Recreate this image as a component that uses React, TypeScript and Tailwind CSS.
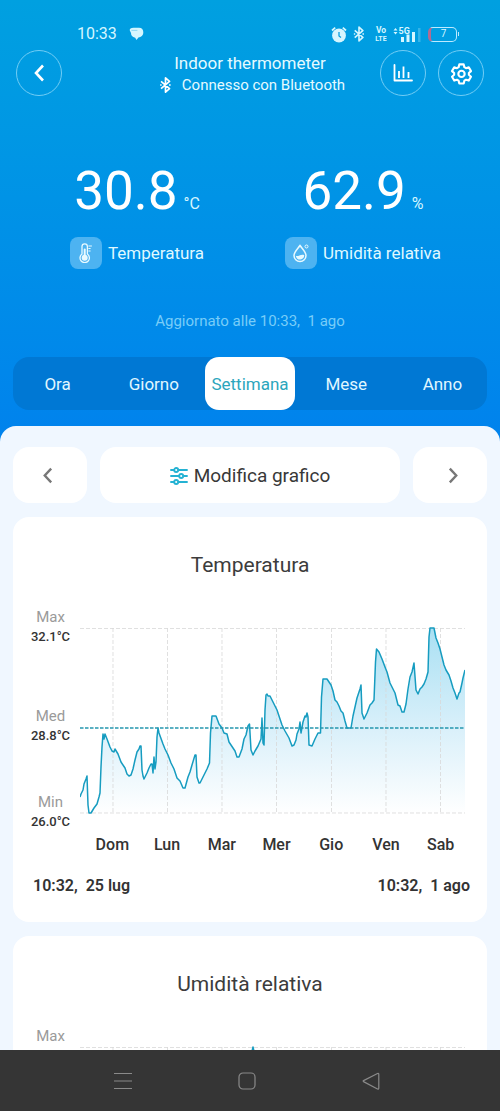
import React, { useState } from 'react';

const PERIODS = ['Ora', 'Giorno', 'Settimana', 'Mese', 'Anno'];
const DAYS = ['Dom', 'Lun', 'Mar', 'Mer', 'Gio', 'Ven', 'Sab'];
const DAY_LINES = [33, 87.5, 142, 196.5, 251.5, 306, 360.5];

const TEMPERATURE =
  '0,170 1,167 3,163 4,157 6,152 7,149 8,178 9,186 11,186 14,181 17,177 19,170 20,166 21,140 22,120 23,107 24,112 25,107 27,112 30,120 32,124 34,125 35,122 38,127 41,135 45,141 47,147 49,149 51,148 53,142 55,133 57,125 59,122 60,119 61,119 62,143 63,149 64,152 65,150 67,146 69,141 71,137 72,137 73,146 74,130 75,142 76,135 77,110 78,101 79,106 83,117 85,122 88,128 91,136 94,142 97,151 100,154 103,161 105,161 108,150 110,145 112,138 115,128 116,128 117,150 119,156 120,156 123,150 127,142 129.5,136 130.5,106 132,89 136,89 139,97 142,101 144,106 147,107 149,115 153,121 155,124 157,130 159,130 162,122 164,112 166,108 168,99 169.5,97 171,123 173,128 175,124 178,119 181,112 182,91 183,116 184,118 185,83 186,68 187,67 188,69 190,69 193,75 195,79 197,83 200,92 202,98 205,104 209,111 212,119 214,118 216,113 217,107 219,102 220,95 221,106 223,95 225,89 226,90 227,86 228,90 229,118 232,119 235,112 238,106 240.5,106 241.5,70 243,52 247,52 249,55 251,58 253,64 255,73 257,75 259,79 261,84 263,86 265,94 267,101 271,101 273,89 275,80 277,71 280,62 281,58 282,86 284,92 287,86 290,78 292,76 294,73 295.5,35 296.5,22 299,25 302,32 305,40 307,45 310,56 312,60 315,66 318,78 320,79 322,85 324,85 326,77 328,62 330,50 332,45 334,36 336,63 338,67 340,62 342,60 344,57 346,52 348,45 349,10 350,1 354,1 356,11 358,16 360,22 361,26 364,38 366,43 369,48 371,54 373,61 375,66 377,72 379,66 380,65 382,56 383,51 385,43';

const HUMIDITY =
  '0,120 20,90 30,60 50,110 75,50 90,95 110,40 130,80 150,30 165,35 173,1 181,35 200,80 230,60 250,110 280,70 310,130 340,90 385,120';

function Bluetooth({ className }: { className: string }) {
  return (
    <svg viewBox="0 0 14 18" className={className} fill="none" stroke="currentColor" strokeWidth="1.9" aria-hidden="true">
      <path d="M2 4.8 11.5 13 7 17V1l4.5 4L2 13.2" strokeLinejoin="round" />
      <path d="M1 9h1.6M11 9h1.8" strokeWidth="1.8" />
    </svg>
  );
}

function Chevron({ flip = false, className }: { flip?: boolean; className: string }) {
  return (
    <svg viewBox="0 0 12 18" className={className} fill="none" stroke="currentColor" strokeWidth="2.6" aria-hidden="true">
      <path d={flip ? 'M2 1.5 9 9l-7 7.5' : 'M10 1.5 3 9l7 7.5'} />
    </svg>
  );
}

function StatusBar() {
  return (
    <div className="flex h-5 items-center justify-between pl-[77px] pr-[41px] text-[#d5f6ff]">
      <div className="flex items-center gap-3">
        <span className="text-base leading-5">10:33</span>
        <svg viewBox="0 0 15 14" className="h-[14px] w-[15px]" fill="currentColor" aria-hidden="true">
          <path d="M4.500 .8h5.500C13 .8 14.300 2.700 14.300 5.200c0 3.200-2.200 5-4.900 5.200L7.500 13 6.200 10.700C3.300 10.200 2 8.400 2 6L.8 3.400C.4 1.700 2 .8 4.500 .8Z" />
          <path d="M2.400 3.400h6" stroke="#60c4ec" strokeWidth=".6" />
        </svg>
      </div>
      <div className="flex items-center">
        <svg viewBox="0 0 16 17" className="h-[17px] w-4" fill="none" stroke="currentColor" aria-hidden="true">
          <circle cx="8" cy="9.500" r="6.900" fill="currentColor" stroke="none" />
          <path d="M1 4.500 4.200 1.600M15 4.500l-3.200-2.900" strokeWidth="1.700" />
          <path d="M8 6v4l2 1.500" stroke="#079ee0" strokeWidth="1.300" />
        </svg>
        <Bluetooth className="ml-1.5 h-4 w-3" />
        <svg viewBox="0 0 12 16" className="ml-2.5 h-4 w-3" fill="currentColor" aria-hidden="true">
          <text x="6" y="7" textAnchor="middle" fontSize="8.500" fontWeight="700">Vo</text>
          <text x="6" y="15" textAnchor="middle" fontSize="7" fontWeight="700">LTE</text>
        </svg>
        <svg viewBox="0 0 29 16" className="ml-1.5 h-4 w-[29px]" fill="currentColor" aria-hidden="true">
          <path d="m.500 4.500 2-2.600 2 2.600ZM.500 6h4l-2 2.500Z" />
          <text x="5.500" y="7.500" fontSize="9" fontWeight="700">5G</text>
          <path d="M8 11h3v5H8ZM13.500 8.500h3V16h-3ZM19 6h3v10h-3Z" />
          <path d="M25 2h2.500v14H25Z" opacity=".25" />
        </svg>
        <span className="ml-1.5 flex h-[15px] w-[29px] items-center justify-center rounded-[5px] border border-[#bdeaff] border-l-[3px] border-l-[#b36b91] text-[10px] leading-3">
          7
        </span>
        <span className="ml-px h-1 w-px bg-[#bdeaff]" />
      </div>
    </div>
  );
}

function AppBar() {
  const round = 'flex size-[46px] items-center justify-center rounded-full border border-[#72cdf5]';
  return (
    <div className="mt-1.5 grid grid-cols-[1fr_auto_1fr] items-center px-4">
      <button className={round} aria-label="Indietro">
        <Chevron className="h-[18px] w-3" />
      </button>
      <div className="pt-0.5 text-center text-[#e4faff]">
        <h1 className="text-[17px] leading-[22px]">Indoor thermometer</h1>
        <p className="flex items-center justify-center gap-2.5 pl-1 text-[15px] leading-[22px]">
          <Bluetooth className="h-4 w-[13px] text-white" />
          Connesso con Bluetooth
        </p>
      </div>
      <div className="flex justify-end gap-3">
        <button className={round} aria-label="Statistiche">
          <svg viewBox="0 0 20 18" className="h-[18px] w-5" fill="none" stroke="currentColor" strokeWidth="1.800" aria-hidden="true">
            <path d="M1.500 1v15.500H19" strokeLinecap="round" strokeLinejoin="round" />
            <path d="M6 7v7M10.500 2.500V14M15.500 8v6" />
          </svg>
        </button>
        <button className={round} aria-label="Impostazioni">
          <svg viewBox="0 0 24 24" className="size-[23px]" fill="none" stroke="currentColor" strokeWidth="2.200" strokeLinejoin="round" aria-hidden="true">
            <path d="M9.700 2.500h4.600l.7 2.900 1.700 1 2.900-.9 2.300 4-2.200 2v1.900l2.200 2-2.300 4-2.900-.9-1.700 1-.7 2.900H9.700L9 19.500l-1.700-1-2.900.9-2.300-4 2.200-2v-1.900l-2.200-2 2.300-4 2.900.9 1.700-1Z" />
            <circle cx="12" cy="12.400" r="3.300" />
          </svg>
        </button>
      </div>
    </div>
  );
}

function Reading({ value, unit, label, icon }: { value: string; unit: string; label: string; icon: React.ReactNode }) {
  return (
    <div className="flex flex-col items-center">
      <p className="flex items-baseline gap-1.5">
        <span className="text-[53px] leading-[60px] text-white">{value}</span>
        <span className="text-base leading-5 text-[#d5f6ff]">{unit}</span>
      </p>
      <div className="mt-4 flex items-center gap-1.5">
        <span className="flex size-8 items-center justify-center rounded-lg bg-[#4db3f1]">{icon}</span>
        <span className="text-[17px] leading-6 text-[#dff8ff]">{label}</span>
      </div>
    </div>
  );
}

function Axis({ name, value }: { name: string; value?: string }) {
  return (
    <div className="text-center">
      <p className="text-[15px] leading-5 text-[#9a9a9a]">{name}</p>
      {value && <p className="text-[13px] font-medium leading-5 text-[#333]">{value}</p>}
    </div>
  );
}

function Plot({ points, id, average }: { points: string; id: string; average?: number }) {
  return (
    <svg viewBox="0 0 385 187" preserveAspectRatio="none" className="mt-5 h-[187px] min-w-0 flex-1" fill="none" role="img" aria-label={id}>
      <defs>
        <linearGradient id={id} x1="0" y1="0" x2="0" y2="187" gradientUnits="userSpaceOnUse">
          <stop offset="0" stopColor="#a9e0f3" />
          <stop offset=".55" stopColor="#daf0fa" />
          <stop offset="1" stopColor="#ffffff" />
        </linearGradient>
      </defs>
      <polygon points={`0,187 ${points} 385,187`} fill={`url(#${id})`} />
      <g stroke="#d8d8d8" strokeOpacity=".8" strokeDasharray="4 2">
        <path d="M0 1.500h385M0 186h385" />
        {DAY_LINES.map((x) => (
          <path key={x} d={`M${x} 1v185`} />
        ))}
      </g>
      <polyline points={points} stroke="#169cc0" strokeWidth="1.500" strokeLinejoin="round" />
      {average && <path d={`M0 ${average}h385`} stroke="#2496ae" strokeWidth="1.500" strokeDasharray="3.500 1.500" />}
    </svg>
  );
}

export default function App() {
  const [period, setPeriod] = useState('Settimana');
  const card = 'rounded-2xl bg-white';
  return (
    <div className="flex h-screen flex-col bg-[#f0f7ff] font-[Roboto,sans-serif]">
      <div className="min-h-0 flex-1 overflow-y-auto [scrollbar-width:none]">
        <header className="bg-linear-to-b from-[#00a0e0] to-[#0082ed] pb-8 pt-6 text-white">
          <StatusBar />
          <AppBar />
          <section className="mt-[65px] grid grid-cols-2 px-6">
            <Reading
              value="30.8"
              unit="°C"
              label="Temperatura"
              icon={
                <svg viewBox="0 0 14 20" className="h-5 w-[14px]" fill="none" stroke="#e9faff" strokeWidth="1.300" strokeLinecap="round" aria-hidden="true">
                  <path d="M3 11V3.500a2.700 2.700 0 0 1 5.400 0V11a4.700 4.700 0 1 1-5.400 0Z" />
                  <circle cx="5.700" cy="14.800" r="3" fill="#e9faff" stroke="none" />
                  <path d="M5.700 6.500v7" strokeWidth="2" />
                  <path d="M9.800 3h2.700M9.800 5.500h1.400M9.800 8h1.400" strokeWidth="1" />
                </svg>
              }
            />
            <Reading
              value="62.9"
              unit="%"
              label="Umidità relativa"
              icon={
                <svg viewBox="0 0 18 20" className="h-5 w-[18px]" fill="none" stroke="#e9faff" strokeWidth="1.500" aria-hidden="true">
                  <path d="M8 2.500C5.500 6 2 9 2 12.500a6 6 0 0 0 12 0C14 9 10.500 6 8 2.500Z" />
                  <path d="M3.800 12.800c2.500 1.400 4.500-2.300 8.400-.8a4.200 4.200 0 0 1-8.400 .8Z" fill="#e9faff" stroke="none" />
                  <circle cx="14.500" cy="3.500" r="1.500" strokeWidth="1" />
                </svg>
              }
            />
          </section>
          <p className="mt-[42px] whitespace-pre text-center text-[15px] leading-5 text-[#78cdf8]">Aggiornato alle 10:33,  1 ago</p>
          <nav className="mx-[13px] mt-[26px] flex h-[53px] gap-[7px] rounded-2xl bg-[#0078d4]">
            {PERIODS.map((name) => (
              <button
                key={name}
                onClick={() => setPeriod(name)}
                className={`min-w-0 flex-1 rounded-[14px] text-[17px] leading-6 ${name === period ? 'bg-white text-[#2ba6bd]' : 'text-[#e0f7ff]'}`}
              >
                {name}
              </button>
            ))}
          </nav>
        </header>

        <main className="relative -mt-4 flex flex-col gap-[14px] rounded-t-2xl bg-[#f0f7ff] px-[13px] pt-[21px]">
          <div className="flex h-14 gap-[13px] text-[#777]">
            <button className="flex w-[74px] items-center justify-center rounded-2xl bg-white" aria-label="Precedente">
              <Chevron className="mr-1.5 h-[17px] w-[11px]" />
            </button>
            <button className="flex flex-1 items-center justify-center gap-1.5 rounded-2xl bg-white pt-0.5 text-[19px] leading-6 text-[#383838]">
              <svg viewBox="0 0 18 18" className="size-[18px]" fill="none" stroke="#24b2d3" strokeWidth="1.900" strokeLinecap="round" aria-hidden="true">
                <path d="M1 3h3M8.500 3H17M1 9h8M13.500 9H17M1 15h3M8.500 15H17" />
                <circle cx="6.200" cy="3" r="2" />
                <circle cx="11.200" cy="9" r="2" />
                <circle cx="6.200" cy="15" r="2" />
              </svg>
              Modifica grafico
            </button>
            <button className="flex w-[74px] items-center justify-center rounded-2xl bg-white" aria-label="Successivo">
              <Chevron flip className="ml-1.5 h-[17px] w-[11px]" />
            </button>
          </div>

          <section className={`${card} pb-[26px] pt-[34px]`}>
            <h2 className="text-center text-[21px] leading-7 text-[#3c3c3c]">Temperatura</h2>
            <div className="mt-7 flex items-start pr-[22px]">
              <div className="w-[67px] pl-2">
                <Axis name="Max" value="32.1°C" />
                <div className="mt-[59px]">
                  <Axis name="Med" value="28.8°C" />
                </div>
                <div className="mt-[46px]">
                  <Axis name="Min" value="26.0°C" />
                </div>
              </div>
              <Plot points={TEMPERATURE} id="temperatura" average={101} />
            </div>
            <div className="mt-px grid grid-cols-7 pl-[72px] pr-[19px] text-center text-base font-medium leading-6 text-[#333]">
              {DAYS.map((day) => (
                <span key={day}>{day}</span>
              ))}
            </div>
            <div className="mt-[19px] flex justify-between whitespace-pre pl-5 pr-[17px] text-base font-semibold leading-5 text-[#333]">
              <span>10:32,  25 lug</span>
              <span>10:32,  1 ago</span>
            </div>
          </section>

          <section className={`${card} pb-[26px] pt-[34px]`}>
            <h2 className="text-center text-[21px] leading-7 text-[#3c3c3c]">Umidità relativa</h2>
            <div className="mt-7 flex items-start pr-[22px]">
              <div className="w-[67px] pl-2">
                <Axis name="Max" />
              </div>
              <Plot points={HUMIDITY} id="umidita" />
            </div>
          </section>
        </main>
      </div>

      <footer className="flex h-[61px] shrink-0 items-center justify-between bg-[#353535] pl-[114px] pr-[120px] text-[#8a8a8a]">
        <button aria-label="Recenti">
          <svg viewBox="0 0 18 18" className="size-[18px]" fill="none" stroke="currentColor" strokeWidth="1.200">
            <path d="M0 1.500h18M0 9h18M0 16.500h18" />
          </svg>
        </button>
        <button aria-label="Home">
          <svg viewBox="0 0 18 18" className="size-[18px]" fill="none" stroke="currentColor" strokeWidth="1.200">
            <rect x="1" y="1" width="16" height="16" rx="4" />
          </svg>
        </button>
        <button aria-label="Indietro di sistema">
          <svg viewBox="0 0 18 18" className="size-[18px]" fill="none" stroke="currentColor" strokeWidth="1.200" strokeLinejoin="round">
            <path d="M1.500 9.600 15.500 17q1.300.4 1.300-1V2.500q0-1.400-1.300-1L1.500 8.600q-.8.500 0 1Z" />
          </svg>
        </button>
      </footer>
    </div>
  );
}
